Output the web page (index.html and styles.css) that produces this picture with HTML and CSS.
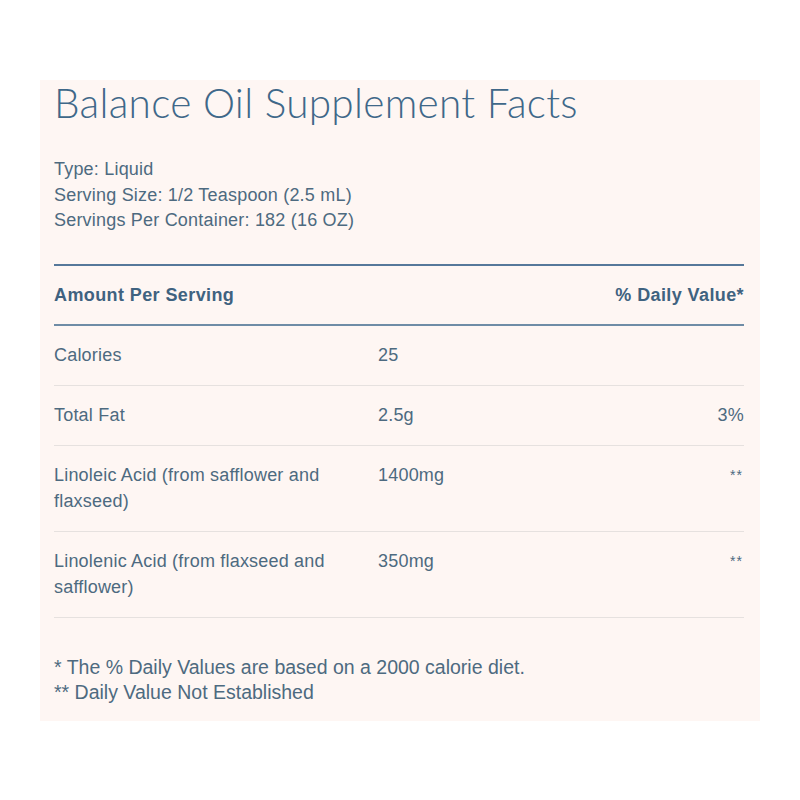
FILE: index.html
```html
<!DOCTYPE html>
<html>
<head>
<meta charset="utf-8">
<link rel="stylesheet" href="styles.css">
</head>
<body>
<div class="page">
  <section class="facts">
    <h1 class="title">Balance Oil Supplement Facts</h1>
    <div class="meta">
      <div>Type: Liquid</div>
      <div>Serving Size: 1/2 Teaspoon (2.5 mL)</div>
      <div>Servings Per Container: 182 (16 OZ)</div>
    </div>
    <table class="table">
      <colgroup>
        <col class="w-name">
        <col class="w-amt">
        <col class="w-dv">
      </colgroup>
      <thead>
        <tr>
          <th class="c-name">Amount Per Serving</th>
          <th class="c-amt"></th>
          <th class="c-dv">% Daily Value*</th>
        </tr>
      </thead>
      <tbody>
        <tr><td class="c-name">Calories</td><td class="c-amt">25</td><td class="c-dv"></td></tr>
        <tr><td class="c-name">Total Fat</td><td class="c-amt">2.5g</td><td class="c-dv">3%</td></tr>
        <tr><td class="c-name">Linoleic Acid (from safflower and flaxseed)</td><td class="c-amt">1400mg</td><td class="c-dv star">**</td></tr>
        <tr><td class="c-name">Linolenic Acid (from flaxseed and safflower)</td><td class="c-amt">350mg</td><td class="c-dv star">**</td></tr>
      </tbody>
    </table>
    <div class="notes">
      <div>* The % Daily Values are based on a 2000 calorie diet.</div>
      <div>** Daily Value Not Established</div>
    </div>
  </section>
</div>
</body>
</html>
```
FILE: styles.css
```css
html, body { margin: 0; padding: 0; background: #fff; }
.page { padding: 80px 40px; }
.facts {
  background: #fef6f3;
  padding: 0 16px 16px 14px;
  color: #4d6a80;
  font-family: "Liberation Sans", Arial, sans-serif;
}
.title {
  margin: 0;
  font-family: Lato, "Open Sans", sans-serif;
  font-weight: 300;
  font-size: 40.5px;
  letter-spacing: 0.3px;
  line-height: 46px;
  color: #3f6889;
}
.meta {
  margin-top: 31px;
  font-size: 18px;
  line-height: 25.5px;
  letter-spacing: 0.2px;
}
.table {
  margin-top: 30px;
  width: 100%;
  table-layout: fixed;
  border-collapse: collapse;
  font-size: 18px;
  letter-spacing: 0.2px;
  line-height: 26px;
}
.w-name { width: 324px; }
.w-dv { width: 160px; }
.table th {
  color: #3f6280;
  text-align: left;
  padding: 16px 0 16px;
  border-top: 2px solid #56789a;
  border-bottom: 2px solid #6f8ca6;
  font-weight: bold;
  letter-spacing: 0.4px;
}
.table td {
  padding: 16px 0 17px;
  vertical-align: top;
  border-bottom: 1px solid #e6e1df;
}
.table .c-name { padding-right: 14px; }
.table .c-dv { text-align: right; }
.table .star { font-size: 14px; letter-spacing: 1px; padding-right: 1px; }
.notes {
  margin-top: 37px;
  font-size: 19.5px;
  line-height: 25px;
}
```
